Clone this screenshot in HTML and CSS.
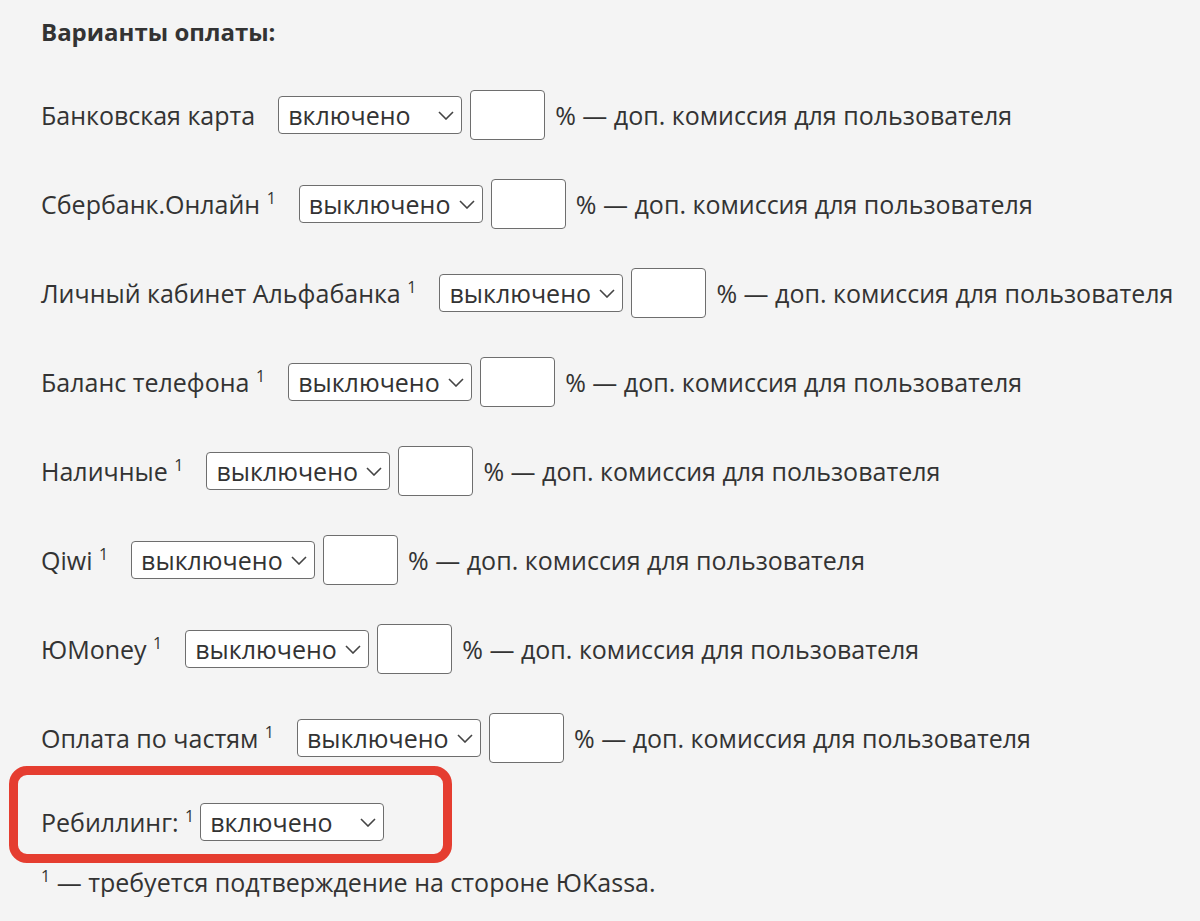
FILE: index.html
```html
<!DOCTYPE html>
<html lang="ru">
<head>
<meta charset="utf-8">
<title>Варианты оплаты</title>
<link rel="stylesheet" href="styles.css">
</head>
<body>
<div class="page">
	<h2 class="title">Варианты оплаты:</h2>

	<div class="method">
		<label class="method-name">Банковская карта</label>
		<span class="select"><select><option>включено</option><option>выключено</option></select><svg class="chevron" width="16" height="9" viewBox="0 0 16 9"><path d="M1 1 L8 8 L15 1" /></svg></span>
		<input class="fee" type="text">
		<span class="fee-note">% — доп. комиссия для пользователя</span>
	</div>
	<div class="method">
		<label class="method-name">Сбербанк.Онлайн <sup>1</sup></label>
		<span class="select"><select><option>выключено</option><option>включено</option></select><svg class="chevron" width="16" height="9" viewBox="0 0 16 9"><path d="M1 1 L8 8 L15 1" /></svg></span>
		<input class="fee" type="text">
		<span class="fee-note">% — доп. комиссия для пользователя</span>
	</div>
	<div class="method">
		<label class="method-name">Личный кабинет Альфабанка <sup>1</sup></label>
		<span class="select"><select><option>выключено</option><option>включено</option></select><svg class="chevron" width="16" height="9" viewBox="0 0 16 9"><path d="M1 1 L8 8 L15 1" /></svg></span>
		<input class="fee" type="text">
		<span class="fee-note">% — доп. комиссия для пользователя</span>
	</div>
	<div class="method">
		<label class="method-name">Баланс телефона <sup>1</sup></label>
		<span class="select"><select><option>выключено</option><option>включено</option></select><svg class="chevron" width="16" height="9" viewBox="0 0 16 9"><path d="M1 1 L8 8 L15 1" /></svg></span>
		<input class="fee" type="text">
		<span class="fee-note">% — доп. комиссия для пользователя</span>
	</div>
	<div class="method">
		<label class="method-name">Наличные <sup>1</sup></label>
		<span class="select"><select><option>выключено</option><option>включено</option></select><svg class="chevron" width="16" height="9" viewBox="0 0 16 9"><path d="M1 1 L8 8 L15 1" /></svg></span>
		<input class="fee" type="text">
		<span class="fee-note">% — доп. комиссия для пользователя</span>
	</div>
	<div class="method">
		<label class="method-name">Qiwi <sup>1</sup></label>
		<span class="select"><select><option>выключено</option><option>включено</option></select><svg class="chevron" width="16" height="9" viewBox="0 0 16 9"><path d="M1 1 L8 8 L15 1" /></svg></span>
		<input class="fee" type="text">
		<span class="fee-note">% — доп. комиссия для пользователя</span>
	</div>
	<div class="method">
		<label class="method-name">ЮMoney <sup>1</sup></label>
		<span class="select"><select><option>выключено</option><option>включено</option></select><svg class="chevron" width="16" height="9" viewBox="0 0 16 9"><path d="M1 1 L8 8 L15 1" /></svg></span>
		<input class="fee" type="text">
		<span class="fee-note">% — доп. комиссия для пользователя</span>
	</div>
	<div class="method last">
		<label class="method-name">Оплата по частям <sup>1</sup></label>
		<span class="select"><select><option>выключено</option><option>включено</option></select><svg class="chevron" width="16" height="9" viewBox="0 0 16 9"><path d="M1 1 L8 8 L15 1" /></svg></span>
		<input class="fee" type="text">
		<span class="fee-note">% — доп. комиссия для пользователя</span>
	</div>

	<!-- выделено рамкой -->
	<div class="highlight">
		<div class="method rebill">
			<label class="method-name">Ребиллинг: <sup>1</sup></label>
			<span class="select"><select><option>включено</option><option>выключено</option></select><svg class="chevron" width="16" height="9" viewBox="0 0 16 9"><path d="M1 1 L8 8 L15 1" /></svg></span>
		</div>
	</div>

	<p class="footnote"><sup>1</sup> — требуется подтверждение на стороне ЮKassa.</p>
</div>
</body>
</html>
```

FILE: styles.css
```css
* {
	margin: 0;
	padding: 0;
	box-sizing: border-box;
}

body {
	background: #f4f4f4;
	color: #333;
	font: 25px/30px "Open Sans", "Liberation Sans", sans-serif;
}

.page {
	padding: 17px 0 0 41px;
}

.title {
	font-size: 24px;
	font-weight: bold;
	line-height: 30px;
	margin-bottom: 43px;
}

.method {
	display: flex;
	align-items: center;
	height: 50px;
	margin-bottom: 39px;
}

.method.last {
	margin-bottom: 3px;
}

.method-name {
	margin-right: 23px;
	white-space: nowrap;
}

sup {
	font-size: 16px;
	line-height: 0;
	vertical-align: 10px;
}

.select {
	position: relative;
	display: inline-block;
}

.select select {
	appearance: none;
	-webkit-appearance: none;
	display: block;
	width: 184px;
	height: 38px;
	padding: 0 0 0 9px;
	border: 1px solid #6e6e6e;
	border-radius: 4px;
	background: #fff;
	color: #333;
	font: inherit;
	outline: none;
}

.chevron {
	position: absolute;
	right: 8px;
	top: 15px;
	pointer-events: none;
}

.chevron path {
	fill: none;
	stroke: #444;
	stroke-width: 1.6;
}

.fee {
	width: 75px;
	height: 50px;
	margin-left: 8px;
	border: 1px solid #6e6e6e;
	border-radius: 4px;
	background: #fff;
	font: inherit;
	outline: none;
}

.fee-note {
	margin-left: 10px;
	white-space: nowrap;
}

.highlight {
	width: 443px;
	margin-left: -32px;
	padding: 28px 0 13px 23px;
	border: 9px solid #e53d30;
	border-radius: 18px;
}

.rebill {
	height: 38px;
	margin-bottom: 0;
}

.rebill .method-name {
	margin-right: 6px;
}

.footnote {
	margin-top: 4px;
}
```
